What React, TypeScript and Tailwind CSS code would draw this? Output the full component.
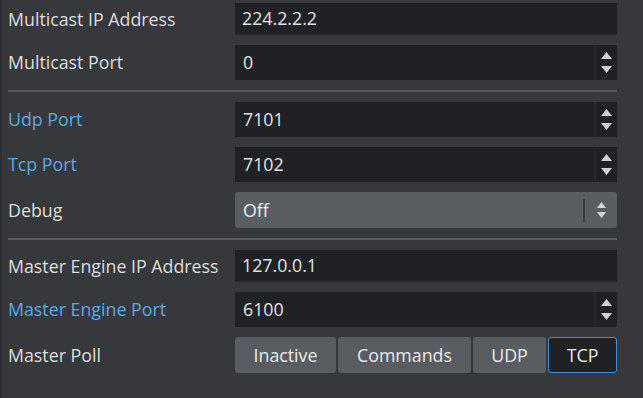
import React from "react";

const font = { fontFamily: '"Open Sans", "Noto Sans", sans-serif' };

function SpinArrows() {
  return (
    <div className="flex w-[23px] h-full flex-col items-center justify-center gap-[7px] border-l-2 border-[#25272b]">
      <svg width="11" height="7" viewBox="0 0 11 7">
        <polygon points="5.5,0 11,7 0,7" fill="#cfcfcf" />
      </svg>
      <svg width="11" height="7" viewBox="0 0 11 7">
        <polygon points="0,0 11,0 5.5,7" fill="#cfcfcf" />
      </svg>
    </div>
  );
}

function Label({ text, blue }: { text: string; blue?: boolean }) {
  return (
    <div
      className={`w-[227px] shrink-0 whitespace-nowrap text-[17.8px] ${blue ? "text-[#5fa8e4]" : "text-[#dedede]"}`}
    >
      {text}
    </div>
  );
}

function TextRow({ label, value, blue }: { label: string; value: string; blue?: boolean }) {
  return (
    <div className="flex h-[32px] items-center">
      <Label text={label} blue={blue} />
      <div className="flex h-full flex-1 items-center bg-[#1f2125] border-b border-[#2a2c30] pl-[7px] text-[17.8px] text-[#e2e2e2]">
        {value}
      </div>
    </div>
  );
}

function SpinRow({ label, value, blue }: { label: string; value: string; blue?: boolean }) {
  return (
    <div className="flex h-[35px] items-center">
      <Label text={label} blue={blue} />
      <div className="flex h-full flex-1 items-center bg-[#1f2125]">
        <div className="flex-1 pl-[8px] text-[17.8px] text-[#e2e2e2]">{value}</div>
        <SpinArrows />
      </div>
    </div>
  );
}

function Divider() {
  return <div className="h-[2px] bg-[#585b5f]" />;
}

export default function App() {
  return (
    <div
      className="w-[643px] h-[398px] overflow-hidden bg-[#36383c] border-l-2 border-[#2d2f33] pl-[6px] pr-[26px] pt-[3px] flex flex-col gap-[10px]"
      style={font}
    >
      <TextRow label="Multicast IP Address" value="224.2.2.2" />
      <SpinRow label="Multicast Port" value="0" />
      <Divider />
      <SpinRow label="Udp Port" value="7101" blue />
      <SpinRow label="Tcp Port" value="7102" blue />
      <div className="flex h-[36px] items-center">
        <Label text="Debug" />
        <div className="flex h-full flex-1 items-center rounded-[3px] bg-[#5a5d61]">
          <div className="flex-1 pl-[8px] text-[17.8px] text-[#ececec]">Off</div>
          <div className="h-[23px] w-[2px] bg-[#393b3f]" />
          <div className="flex w-[32px] flex-col items-center justify-center gap-[4px]">
            <svg width="9" height="6" viewBox="0 0 9 6">
              <polygon points="4.5,0 9,6 0,6" fill="#d4d4d4" />
            </svg>
            <svg width="9" height="6" viewBox="0 0 9 6">
              <polygon points="0,0 9,0 4.5,6" fill="#d4d4d4" />
            </svg>
          </div>
        </div>
      </div>
      <Divider />
      <TextRow label="Master Engine IP Address" value="127.0.0.1" />
      <SpinRow label="Master Engine Port" value="6100" blue />
      <div className="flex h-[36px] items-center">
        <Label text="Master Poll" />
        <div className="flex h-full flex-1 gap-[2px] text-[17.8px]">
          <div className="flex w-[101px] items-center justify-center rounded-[3px] bg-[#595c60] text-[#ececec]">
            Inactive
          </div>
          <div className="flex w-[133px] items-center justify-center rounded-[3px] bg-[#595c60] text-[#ececec]">
            Commands
          </div>
          <div className="flex w-[73px] items-center justify-center rounded-[3px] bg-[#595c60] text-[#ececec]">
            UDP
          </div>
          <div className="flex flex-1 items-center justify-center rounded-[3px] border border-[#3d8fe0] bg-[#1f2125] text-[#ececec]">
            TCP
          </div>
        </div>
      </div>
    </div>
  );
}
